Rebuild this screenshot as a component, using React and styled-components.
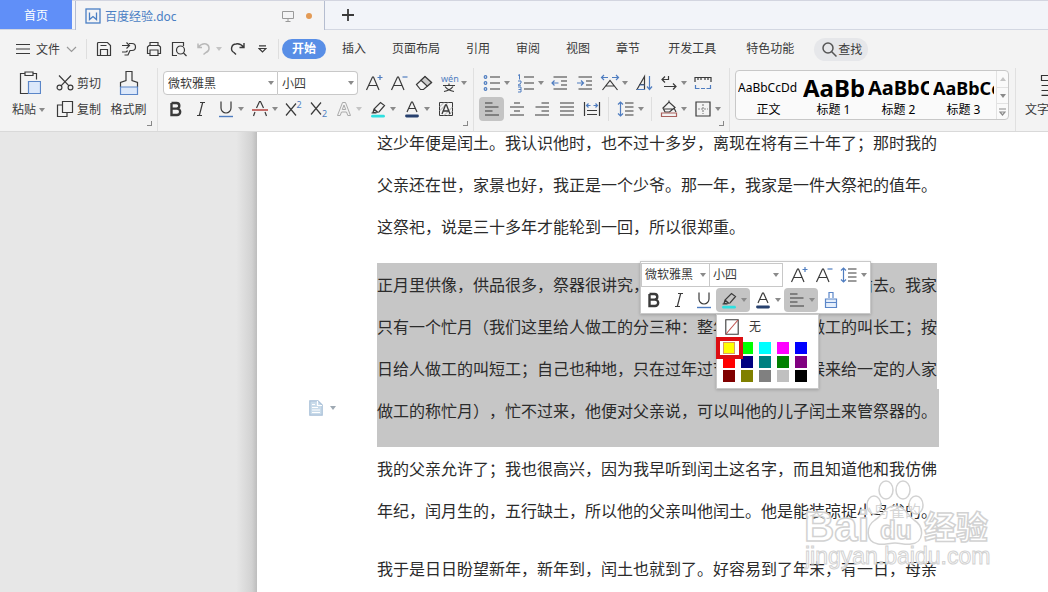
import React from "react";
import styled, { createGlobalStyle, css } from "styled-components";

const ink = "#3a3a3a";
const blue = "#4f7dc0";
const uiFont = '"Noto Sans", "Noto Sans CJK SC", sans-serif';

const Global = createGlobalStyle`
  * { box-sizing: border-box; }
  body { margin: 0; font-family: ${uiFont}; font-size: 12px; color: ${ink}; background: #e7e7e7; }
  button, select, input { font: inherit; color: inherit; }
  button { border: 0; padding: 0; background: none; cursor: pointer; }
  svg { display: block; flex: none; }
`;

const Shell = styled.div`
  height: 100vh;
  display: flex;
  flex-direction: column;
  overflow: hidden;
`;

/* ---------- window tabs ---------- */
const TabStrip = styled.header`
  flex: none;
  height: 30px;
  display: flex;
  background: #f2f4f9;
  border-top: 1px solid #d3d5e0;
  border-bottom: 1px solid #d3d7e2;
`;
const HomeTab = styled.button`
  width: 72px;
  height: 29px;
  margin-top: -1px;
  background: #608ff8;
  color: #fff;
`;
const FileTab = styled.div`
  width: 250px;
  height: 29px;
  margin-left: 3px;
  padding: 0 12px 0 9px;
  display: flex;
  align-items: center;
  gap: 4px;
  background: #f4f4f5;
  border: solid #b5bdd0;
  border-width: 0 1px;
  color: #4a7fc4;
`;
const FileName = styled.span`
  flex: 1;
`;
const Dot = styled.span`
  width: 6px;
  height: 6px;
  margin-left: 8px;
  border-radius: 50%;
  background: #e39a55;
`;
const NewTab = styled.button`
  width: 46px;
  display: grid;
  place-items: center;
`;

/* ---------- menu row ---------- */
const MenuBar = styled.nav`
  flex: none;
  height: 38px;
  display: flex;
  align-items: center;
  background: #f3f3f3;
  white-space: nowrap;
`;
const FileMenu = styled.button`
  height: 24px;
  padding: 0 5px 0 16px;
  display: flex;
  align-items: center;
  gap: 6px;
`;
const Rule = styled.span`
  flex: none;
  width: 1px;
  height: ${(p) => p.$h || 20}px;
  margin: 0 ${(p) => p.$gap || 4}px;
  background: #dedede;
`;
const MenuTab = styled.button`
  height: 20px;
  line-height: 18px;
  padding: 0 ${(p) => (p.$wide ? 15 : 13)}px;
  ${(p) =>
    p.$active &&
    css`
      padding: 0 10px;
      margin-right: 3px;
      border-radius: 10px;
      background: #588ee6;
      color: #fff;
      font-weight: 700;
    `}
`;
const Search = styled.button`
  height: 23px;
  margin-left: 5px;
  padding: 0 6px 0 7px;
  display: flex;
  align-items: center;
  border-radius: 12px;
  background: #e6e7ea;
`;

/* ---------- ribbon ---------- */
const Ribbon = styled.section`
  flex: none;
  height: 64px;
  display: flex;
  overflow: hidden;
  background: #f3f3f3;
  border-bottom: 1px solid #d9d9d9;
  position: relative;
  white-space: nowrap;
`;
const Group = styled.div`
  flex: none;
  position: relative;
  width: ${(p) => p.$w}px;
  padding: 2px 0 0 ${(p) => p.$pad}px;
  border-right: 1px solid #e0e0e0;
`;
const Row = styled.div`
  display: flex;
  align-items: center;
  height: ${(p) => p.$h || 26}px;
`;
const Corner = styled.span`
  position: absolute;
  right: 5px;
  bottom: 5px;
  width: 5px;
  height: 5px;
  border: solid #888;
  border-width: 0 1px 1px 0;
`;
const ToolBtn = styled.button`
  flex: none;
  display: flex;
  align-items: center;
  width: ${(p) => (p.$menu ? 34 : 25)}px;
  height: 24px;
  border-radius: 4px;
  background: ${(p) => (p.$pressed ? "#c4c4c4" : "none")};
`;
const Glyph = styled.span`
  width: 25px;
  display: grid;
  place-items: center;
`;
const Clipboard = styled.div`
  display: grid;
  grid-template-columns: 45px 55px 45px;
`;
const BigBtn = styled.button`
  display: flex;
  flex-direction: column;
  align-items: center;
  gap: 5px;
  line-height: 18px;
`;
const BigLabel = styled.span`
  display: flex;
  align-items: center;
  gap: 3px;
`;
const Stack = styled.div`
  display: flex;
  flex-direction: column;
`;
const SmallBtn = styled.button`
  height: 26px;
  display: flex;
  align-items: center;
  justify-content: center;
  gap: 3px;
`;

const ComboBox = styled.label`
  flex: none;
  position: relative;
  display: flex;
  align-items: center;
  width: ${(p) => p.$w}px;
  height: 24px;
  background: #fff;
  border: 1px solid #c8c8c8;
  border-radius: ${(p) => p.$r || "0"};
  & + & { border-left: 0; }
`;
const Select = styled.select`
  appearance: none;
  width: 100%;
  height: 100%;
  padding: 0 0 0 ${(p) => p.$pad}px;
  border: 0;
  background: none;
  outline: none;
`;
const ComboCaret = styled.span`
  position: absolute;
  right: 3px;
  pointer-events: none;
`;
const Spacer = styled.span`
  flex: none;
  width: 3px;
`;

const Styles = styled.div`
  width: 274px;
  height: 50px;
  display: flex;
  background: #fafafa;
  border: 1px solid #c8c8c8;
  border-radius: 4px;
  color: #000;
`;
const StyleCard = styled.button`
  width: 61px;
  margin: 0 2px;
  overflow: hidden;
  display: flex;
  flex-direction: column;
  align-items: center;
`;
const Sample = styled.span`
  height: 32px;
  line-height: 34px;
  align-self: flex-start;
  color: #000;
  font-size: ${(p) => p.$size}px;
  font-weight: ${(p) => (p.$bold ? 700 : 400)};
`;
const StyleName = styled.span`
  line-height: 13px;
  color: #000;
`;
const Spin = styled.div`
  width: 12px;
  display: grid;
  grid-template-rows: repeat(3, 1fr);
  border-left: 1px solid #e2e2e2;
`;
const SpinBtn = styled.button`
  display: grid;
  place-items: center;
  & + & { border-top: 1px solid #e2e2e2; }
`;

/* ---------- document ---------- */
const Workspace = styled.main`
  flex: 1;
  min-height: 0;
  display: flex;
  position: relative;
  overflow: hidden;
`;
const Gutter = styled.div`
  flex: none;
  width: 257px;
  background: linear-gradient(to right, #e7e7e7 92%, #d2d2d2 98%, #bdbdbd);
`;
const Page = styled.article`
  flex: 1;
  background: #fff;
  margin-top: -11px;
`;
const Block = styled.div`
  display: grid;
  grid-template-columns: 120px auto;
  justify-content: start;
  margin-bottom: ${(p) => (p.$tight ? 0 : 16)}px;
`;
const Para = styled.div`
  grid-column: 2;
  position: relative;
  font-family: "Noto Sans CJK SC", sans-serif;
  font-size: 16px;
  line-height: 42px;
  color: #2b2b2b;
  white-space: nowrap;
  font-weight: 400;
  text-spacing-trim: space-all;
`;
const Line = styled.div`
  width: max-content;
  ${(p) => p.$selected && css`background: #c6c6c6;`}
  ${(p) =>
    p.$end &&
    css`
      padding: 0 2px 16px 0;
    `}
`;
const MarginTool = styled.button`
  align-self: end;
  justify-self: end;
  display: flex;
  align-items: center;
  gap: 7px;
  margin: 0 41px 31px 0;
`;

/* ---------- floating tools ---------- */
const Floating = styled.div`
  position: absolute;
  left: 263px;
  top: -2px;
  width: 231px;
  padding: 1px 0 0;
  background: #fff;
  border: 1px solid #c9c9c9;
  box-shadow: 0 1px 3px rgba(0, 0, 0, 0.2);
  font: 12px/16px ${uiFont};
  color: ${ink};
  z-index: 2;
`;
const Palette = styled.div`
  position: absolute;
  left: 75px;
  top: 52px;
  width: 103px;
  height: 75px;
  padding: 3px 0 0 6px;
  background: #fff;
  border: 1px solid #c9c9c9;
  box-shadow: 0 1px 3px rgba(0, 0, 0, 0.2);
`;
const NoColor = styled.button`
  display: flex;
  align-items: center;
  gap: 10px;
  height: 18px;
  padding-left: 2px;
`;
const Swatches = styled.div`
  display: grid;
  grid-template-columns: repeat(5, 12px);
  grid-auto-rows: 12px;
  gap: 2px 6px;
  margin-top: 6px;
`;
const Swatch = styled.button`
  position: relative;
  background: ${(p) => p.$c};
  ${(p) =>
    p.$picked &&
    css`
      z-index: 1;
      border: 1px solid #d9a060;
      &::after {
        content: "";
        position: absolute;
        inset: -6px -9px -6px -8px;
        border: 4px solid #dc0d12;
      }
    `}
`;

const Watermark = styled.div`
  position: absolute;
  right: 54px;
  bottom: 20px;
  z-index: 3;
  pointer-events: none;
`;

/* ---------- icons ---------- */
const Icon = ({ w = 20, h = 20, s = ink, sw = 1.2, children }) => (
  <svg width={w} height={h} viewBox={`0 0 ${w} ${h}`} fill="none" stroke={s} strokeWidth={sw} aria-hidden="true">
    {children}
  </svg>
);
const Caret = ({ c = "#8a8a8a", up }) => (
  <svg width="6" height="4" viewBox="0 0 6 4" aria-hidden="true">
    <path d={up ? "M0 4h6L3 0z" : "M0 0h6L3 4z"} fill={c} />
  </svg>
);

const icons = {
  plus: <Icon w={14} h={14} sw={1.8}><path d="M7 1v12M1 7h12" /></Icon>,
  burger: <Icon w={14} h={12}><path d="M0 1.5h14M0 6h14M0 10.500h14" /></Icon>,
  chev: <Icon w={11} h={7} s="#999"><path d="M1 1l4.500 4.500L10 1" /></Icon>,
  doc: <Icon w={16} h={16} s="#4a7fc4" sw={1.3}><rect x="1" y="1" width="14" height="14" /><path d="M4.500 4.500v7l3.500-3 3.500 3v-7" /></Icon>,
  screen: <Icon w={12} h={12} s="#9a9a9a" sw={1}><path d="M.5 1.500h11v7H.5zM6 8.500v3M3.500 11.500h5" /></Icon>,
  save: <Icon><path d="M4 3.500h9.500l3 3v10H3.500V4.500zM6.500 16.500v-6h7v6M6.500 6.500h6" /></Icon>,
  share: <Icon><path d="M3 6.500h7M7.500 3.500l3 3-3 3M3 13h3.500q1.500 0 2-1.500M10 4.500h3a3.500 3.500 0 010 7h-2l-2 4.500H5.500" /></Icon>,
  print: <Icon><path d="M6 7V3.500h8V7M5.500 14.500H3.500V8l1.500-1.500h10L16.500 8v6.500h-2M6 11h8v5.500H6z" /></Icon>,
  preview: <Icon><path d="M8 16.500H3.500v-13h11V7" /><circle cx="11.500" cy="11" r="4" /><path d="M14.500 14l3 3" /></Icon>,
  undo: <Icon s="#b9b9b9" sw={1.5}><path d="M4 4.500v4h4M4 8.500q4-4.500 8-3.500a4.500 4.500 0 010 8.500l-2.500 2" /></Icon>,
  redo: <Icon sw={1.4}><path d="M16 4v4.500h-4.500M16 8.500Q12 4 8 5a4.500 4.500 0 00-2 8.500l2 2" /></Icon>,
  more: <Icon w={9} h={9}><path d="M1 .8h7M1 3.500l3.500 3.500L8 3.500z" /></Icon>,
  search: <Icon w={17} h={17} s="#555" sw={1.5}><circle cx="7" cy="7" r="5" /><path d="M10.500 10.500l5 5" /></Icon>,
  paste: (
    <Icon w={24} h={26}>
      <path d="M8 3.500H3.500v20h8M16 3.500h3.500v6M8 2h8v3.500H8z" />
      <path d="M11.500 11.500h12v12h-12z" fill="#dce8fa" stroke="#5b86c8" />
    </Icon>
  ),
  cut: <Icon w={18} h={18}><circle cx="3.500" cy="13.500" r="2.400" /><circle cx="14.500" cy="13.500" r="2.400" /><path d="M3 1.500l10 10.300M15 1.500L5 11.800" /></Icon>,
  copy: <Icon w={18} h={18}><path d="M6.500 1.500h10v11h-10zM6.500 5H1.500v11.500h9.500v-4" /></Icon>,
  brush: (
    <Icon w={20} h={26}>
      <path d="M1.500 17v-4.500L7 10.500V1.500h6v9l5.500 2V17" />
      <path d="M1.500 17h17v7.500h-17z" fill="#dce8fa" stroke="#5b86c8" />
    </Icon>
  ),
  brushSm: (
    <Icon w={14} h={18}>
      <path d="M5 7V1.500h4V7" stroke="#5b86c8" />
      <path d="M1.500 8h11v3.500h-11zM1.500 11.500h11v5h-11z" fill="#e4eefb" stroke="#5b86c8" />
    </Icon>
  ),
  bigger: <Icon><path d="M2.500 17L8.500 4h1L15 17M5 12.500h8" /><path d="M13.500 4.500h5M16 2v5" stroke={blue} /></Icon>,
  smaller: <Icon><path d="M2.500 17L8.500 4h1L15 17M5 12.500h8" /><path d="M13.500 4h5" stroke={blue} /></Icon>,
  eraser: <Icon><path d="M2.500 11.500L11 3.500l6.500 6-8 7h-3z" /><path d="M7 7.300l6.300 6L17.500 9.500 11 3.500z" fill="#ccc" /></Icon>,
  bold: <Icon sw={2.4}><path d="M5.500 4v12h5.500a3.200 3.200 0 000-6.400H5.500M5.500 4h5a2.800 2.800 0 010 5.600" /></Icon>,
  italic: <Icon><path d="M9 3.500h5M6 16.500h5M11.700 3.500l-3.400 13" /></Icon>,
  under: <Icon><path d="M5 2.500v6.500a5 5 0 0010 0V2.500" /><path d="M3 17.500h14" stroke={blue} strokeWidth="1.400" /></Icon>,
  strike: <Icon><path d="M6.500 9l3-6.500h1l3 6.500M5 13l-1.500 4M15 13l1.500 4" /><path d="M2 11h16" stroke="#b4423e" strokeWidth="1.500" /></Icon>,
  clearA: <Icon s="#aaa" sw={1}><path d="M3.500 16.500L8.500 3.500h3l5 13h-2.700l-1.300-3.500H7.500l-1.300 3.500zM8.300 10.500h3.400L10 6z" /></Icon>,
  marker: <Icon><path d="M5 13.500l1-3.500 6.500-6.500 4 3L11 13zM6 10l4 3.500M3.500 14h5" /><path d="M4.500 17.200h11" stroke="#2fe0e0" strokeWidth="2.800" strokeLinecap="round" /></Icon>,
  fontColor: <Icon><path d="M5 13l4.500-10h1L15 13M6.700 9.500h6.600" /><path d="M4.500 17h11" stroke="#27406e" strokeWidth="2.800" strokeLinecap="round" /></Icon>,
  shade: <Icon sw={1}><path d="M3.500 3.500h13v13h-13z" /><path d="M3.500 8L8 3.500M3.500 12L12 3.500M8 16.500l8.500-8.500M12 16.500l4.500-4.500" stroke="#aaa" /><path d="M6 15l3.500-9h1L14 15M7.500 12h5" strokeWidth="1.300" /></Icon>,
  outdent: <Icon><path d="M3.500 4h13.500M11 8h6M11 12h6M3.500 16h13.500" /><path d="M8.500 10H2M4.500 7.500L2 10l2.500 2.500" stroke={blue} /></Icon>,
  indent: <Icon><path d="M3.500 4h13.500M11 8h6M11 12h6M3.500 16h13.500" /><path d="M2 10h6.500M6 7.500L8.500 10 6 12.500" stroke={blue} /></Icon>,
  scaleA: <Icon><path d="M2.500 17L10 7.500 17.500 17M5.500 13h9" /><path d="M8 4.500H1.500M4 2L1.500 4.500 4 7M12 4.500h6.500M16 2l2.500 2.500L16 7" stroke={blue} /></Icon>,
  sort: <Icon><path d="M3 16.500L10.500 3.500v13zM5 11.500h5" /><path d="M3 16.500h8M5.500 12h5M15.500 3v13M13 13.500l2.500 3 2.500-3" stroke={blue} /></Icon>,
  ret: <Icon><path d="M6 3.500L3 6.500l3 3M3 6.500h6.500v-3.500M5 13.500h12M14 10.500l3 3-3 3" /></Icon>,
  tabs: <Icon><path d="M2 9V4.500h16V9M5 4.500V7M8 4.500V7M12 4.500V7M15 4.500V7" /><path d="M2.500 12v3.500h4M8 15.500h4M17.500 12v3.500h-4" stroke={blue} /></Icon>,
  left: <Icon><path d="M3 4h7.500M3 8h13.500M3 12h7.500M3 16h14" /></Icon>,
  center: <Icon><path d="M7 4h6M3 8h14M7 12h6M3 16h14" /></Icon>,
  right: <Icon><path d="M9.500 4H17M3.500 8H17M9.500 12H17M3 16h14" /></Icon>,
  justify: <Icon><path d="M3 4h14M3 8h14M3 12h14M3 16h14" /></Icon>,
  distribute: <Icon><path d="M2.500 3v14M17.500 3v14M5 11.500h10M5 15.500h10" /><path d="M5 6.500h3.500M6.500 4.500l-2 2 2 2M11.500 6.500H15M13.500 4.500l2 2-2 2" stroke={blue} /></Icon>,
  spacing: <Icon><path d="M9 4h8.500M9 8h8.500M9 12h8.500M9 16h8.500" /><path d="M4.500 3v14M2 5.500L4.500 3 7 5.500M2 14.500L4.500 17 7 14.500" stroke={blue} /></Icon>,
  bucket: <Icon><path d="M4 9l6-6 6 5.500-5.500 4.500H6zM4 10h11.500l1.500 3M10 3V1.500" /><path d="M2.500 14h15v3.500h-15z" stroke="#a9605c" /></Icon>,
  border: <Icon><path d="M3 3h14v14H3z" /><path d="M10 5v10M5 10h10" stroke="#888" strokeDasharray="2 1" /></Icon>,
  none: <Icon w={14} h={16} sw={1.1}><path d="M.8.8h12.400v14.400H.8z" /><path d="M1 15L13 1" stroke="#c0504d" /></Icon>,
  note: (
    <Icon w={14} h={16} s="#a9c0d8">
      <path d="M.8.8h8.200L13.200 5v10.200H.8z" fill="#c9dbea" />
      <path d="M3 4.500h3M3 7.500h6M3 10h8M3 12.500h8M8.500 1v4.500H13" stroke="#fff" />
    </Icon>
  ),
  textbox: <Icon w={20} h={26} s="#333"><path d="M20 5.500H2.500v5H20M2.500 15.500H20M2.500 20.500H20M2.500 25.400H20" /></Icon>,
};

const SvgText = ({ children, ...p }) => (
  <text stroke="none" fill={blue} fontFamily={uiFont} {...p}>{children}</text>
);
icons.sup = <Icon><path d="M2 4.500l10 12M12 4.500l-10 12" /><SvgText x="12.500" y="9" fontSize="9">2</SvgText></Icon>;
icons.sub = <Icon><path d="M2 3.500l10 12M12 3.500l-10 12" /><SvgText x="13" y="18" fontSize="9">2</SvgText></Icon>;
icons.pinyin = (
  <Icon>
    <SvgText x="2" y="9" fontSize="9">wén</SvgText>
    <path d="M4 12.500h12M10 10.500v2M6 13.500q3 4 9 5M14 13.500q-3 4-9 5" />
  </Icon>
);
icons.bullets = (
  <Icon><path d="M8 4h10M8 10h10M8 16h10" /><g stroke={blue}><circle cx="3.500" cy="4" r="1.300" /><circle cx="3.500" cy="10" r="1.300" /><circle cx="3.500" cy="16" r="1.300" /></g></Icon>
);
icons.numbers = (
  <Icon>
    <path d="M8 4h10M8 10h10M8 16h10" />
    <path d="M2 2.500l1.500-1v5M2 8h3v2l-3 2.200h3M2 14h3v5H2M2.500 16.500H5" stroke={blue} strokeWidth="1" />
  </Icon>
);

const Tool = ({ icon, label, menu, pressed, dim }) => (
  <ToolBtn $menu={menu} $pressed={pressed} aria-label={label} aria-pressed={pressed}>
    <Glyph>{icons[icon]}</Glyph>
    {menu && <Caret c={dim ? "#c4c4c4" : undefined} />}
  </ToolBtn>
);
const Combo = ({ label, value, w, r, pad = 4 }) => (
  <ComboBox $w={w} $r={r}>
    <Select aria-label={label} $pad={pad} defaultValue={value}><option>{value}</option></Select>
    <ComboCaret><Caret /></ComboCaret>
  </ComboBox>
);

const menuTabs = ["插入", "页面布局", "引用", "审阅", "视图", "章节"];
const palette = [
  "#ffff00", "#00ff00", "#00ffff", "#ff00ff", "#0000ff",
  "#ff0000", "#000080", "#008080", "#008000", "#800080",
  "#800000", "#808000", "#808080", "#c0c0c0", "#000000",
];
const styleCards = [
  ["正文", "AaBbCcDd", 12, false],
  ["标题 1", "AaBb", 24, true],
  ["标题 2", "AaBbC", 20, true],
  ["标题 3", "AaBbCc", 18, true],
];

const Lines = ({ items }) => items.map((t) => <Line key={t}>{t}</Line>);

export default function App() {
  return (
    <Shell>
      <Global />
      <TabStrip>
        <HomeTab>首页</HomeTab>
        <FileTab>
          {icons.doc}
          <FileName>百度经验.doc</FileName>
          {icons.screen}
          <Dot />
        </FileTab>
        <NewTab aria-label="新建">{icons.plus}</NewTab>
      </TabStrip>

      <MenuBar>
        <FileMenu>{icons.burger}文件{icons.chev}</FileMenu>
        <Rule $h={20} />
        <Tool icon="save" label="保存" />
        <Tool icon="share" label="输出" />
        <Tool icon="print" label="打印" />
        <Tool icon="preview" label="打印预览" />
        <Tool icon="undo" label="撤销" menu dim />
        <Tool icon="redo" label="恢复" />
        <ToolBtn aria-label="更多"><Glyph>{icons.more}</Glyph></ToolBtn>
        <Rule $h={20} $gap={3} />
        <MenuTab $active>开始</MenuTab>
        {menuTabs.map((t) => <MenuTab key={t}>{t}</MenuTab>)}
        <MenuTab $wide>开发工具</MenuTab>
        <MenuTab $wide>特色功能</MenuTab>
        <Search>{icons.search}查找</Search>
      </MenuBar>

      <Ribbon>
        <Group $w={158} $pad={6}>
          <Clipboard>
            <BigBtn>{icons.paste}<BigLabel>粘贴<Caret /></BigLabel></BigBtn>
            <Stack>
              <SmallBtn>{icons.cut}剪切</SmallBtn>
              <SmallBtn>{icons.copy}复制</SmallBtn>
            </Stack>
            <BigBtn>{icons.brush}<BigLabel>格式刷</BigLabel></BigBtn>
          </Clipboard>
          <Corner />
        </Group>

        <Group $w={316} $pad={5}>
          <Row>
            <Combo label="字体" value="微软雅黑" w={115} r="4px 0 0 4px" />
            <Combo label="字号" value="小四" w={80} r="0 4px 4px 0" />
            <Spacer />
            <Tool icon="bigger" label="增大字号" />
            <Tool icon="smaller" label="减小字号" />
            <Tool icon="eraser" label="清除格式" />
            <Tool icon="pinyin" label="拼音指南" menu />
          </Row>
          <Row>
            <Tool icon="bold" label="加粗" />
            <Tool icon="italic" label="倾斜" />
            <Tool icon="under" label="下划线" menu />
            <Tool icon="strike" label="删除线" menu />
            <Tool icon="sup" label="上标" />
            <Tool icon="sub" label="下标" />
            <Tool icon="clearA" label="文字效果" menu dim />
            <Tool icon="marker" label="突出显示" menu />
            <Tool icon="fontColor" label="字体颜色" menu />
            <Tool icon="shade" label="字符底纹" />
          </Row>
          <Corner />
        </Group>

        <Group $w={256} $pad={5}>
          <Row>
            <Tool icon="bullets" label="项目符号" menu />
            <Tool icon="numbers" label="编号" menu />
            <Tool icon="outdent" label="减少缩进" />
            <Tool icon="indent" label="增加缩进" />
            <Tool icon="scaleA" label="中文版式" menu />
            <Tool icon="sort" label="排序" />
            <Tool icon="ret" label="显示标记" menu />
            <Tool icon="tabs" label="制表位" />
          </Row>
          <Row>
            <Tool icon="left" label="左对齐" pressed />
            <Tool icon="center" label="居中" />
            <Tool icon="right" label="右对齐" />
            <Tool icon="justify" label="两端对齐" />
            <Tool icon="distribute" label="分散对齐" />
            <Rule $h={24} />
            <Tool icon="spacing" label="行距" menu />
            <Rule $h={24} />
            <Tool icon="bucket" label="底纹颜色" menu />
            <Tool icon="border" label="边框" menu />
          </Row>
          <Corner />
        </Group>

        <Group $w={286} $pad={5}>
          <Styles>
            {styleCards.map(([name, sample, size, bold]) => (
              <StyleCard key={name}>
                <Sample $size={size} $bold={bold}>{sample}</Sample>
                <StyleName>{name}</StyleName>
              </StyleCard>
            ))}
            <Spin>
              <SpinBtn aria-label="上一行"><Caret up c="#c4c4c4" /></SpinBtn>
              <SpinBtn aria-label="下一行"><Caret /></SpinBtn>
              <SpinBtn aria-label="展开"><Icon w={7} h={8} s="#8a8a8a"><path d="M0 1h7M1 4l2.500 3L6 4z" /></Icon></SpinBtn>
            </Spin>
          </Styles>
        </Group>

        <Group $w={80} $pad={9}>
          <BigBtn>{icons.textbox}<BigLabel>文字排版</BigLabel></BigBtn>
        </Group>
      </Ribbon>

      <Workspace>
        <Gutter />
        <Page>
          <Block>
            <Para>
              <Lines items={[
                "这少年便是闰土。我认识他时，也不过十多岁，离现在将有三十年了；那时我的",
                "父亲还在世，家景也好，我正是一个少爷。那一年，我家是一件大祭祀的值年。",
                "这祭祀，说是三十多年才能轮到一回，所以很郑重。",
              ]} />
            </Para>
          </Block>

          <Block $tight>
            <MarginTool aria-label="段落布局">{icons.note}<Caret c="#9fa9b3" /></MarginTool>
            <Para>
              <Line $selected>正月里供像，供品很多，祭器很讲究，拜的人也很多，祭器也很要防偷去。我家</Line>
              <Line $selected>只有一个忙月（我们这里给人做工的分三种：整年给一定人家做工的叫长工；按</Line>
              <Line $selected>日给人做工的叫短工；自己也种地，只在过年过节以及收租时候来给一定的人家</Line>
              <Line $selected $end>做工的称忙月），忙不过来，他便对父亲说，可以叫他的儿子闰土来管祭器的。</Line>
              <Floating>
                <Row $h={24}>
                  <Combo label="字体" value="微软雅黑" w={69} pad={3} />
                  <Combo label="字号" value="小四" w={73} pad={3} />
                  <Spacer />
                  <Tool icon="bigger" label="增大字号" />
                  <Tool icon="smaller" label="减小字号" />
                  <Tool icon="spacing" label="行距" menu />
                </Row>
                <Row>
                  <Tool icon="bold" label="加粗" />
                  <Tool icon="italic" label="倾斜" />
                  <Tool icon="under" label="下划线" />
                  <Tool icon="marker" label="突出显示" menu pressed />
                  <Tool icon="fontColor" label="字体颜色" menu />
                  <Tool icon="left" label="对齐" menu pressed />
                  <Tool icon="brushSm" label="格式刷" />
                </Row>
                <Palette>
                  <NoColor>{icons.none}无</NoColor>
                  <Swatches>
                    {palette.map((c, i) => <Swatch key={c} $c={c} $picked={i === 0} aria-label={c} />)}
                  </Swatches>
                </Palette>
              </Floating>
            </Para>
          </Block>

          <Block>
            <Para>
              <Lines items={[
                "我的父亲允许了；我也很高兴，因为我早听到闰土这名字，而且知道他和我仿佛",
                "年纪，闰月生的，五行缺土，所以他的父亲叫他闰土。他是能装弶捉小鸟雀的。",
              ]} />
            </Para>
          </Block>
          <Block>
            <Para>
              <Lines items={["我于是日日盼望新年，新年到，闰土也就到了。好容易到了年末，有一日，母亲"]} />
            </Para>
          </Block>
        </Page>

        <Watermark>
          <svg width="190" height="94" viewBox="0 0 190 94" fill="#fff" fillOpacity="0.8" stroke="#d2d2d2" strokeWidth="1.500">
            <ellipse cx="70" cy="27" rx="7" ry="9" />
            <ellipse cx="82" cy="12" rx="7" ry="9" />
            <ellipse cx="99" cy="12" rx="7" ry="9" />
            <ellipse cx="112" cy="27" rx="7" ry="9" />
            <path d="M91 28c10 0 12 9 19 14 11 7 10 23-3 24-6 1-10-1-16-1s-11 2-17 1c-13-2-12-18-3-24 8-5 10-14 20-14z" />
            <text x="0" y="63" fontFamily='"Liberation Sans", sans-serif' fontWeight="700" fontSize="42">Bai</text>
            <text x="76" y="61" fontFamily='"Liberation Sans", sans-serif' fontWeight="700" fontSize="26">du</text>
            <text x="120" y="61" fontFamily='"Noto Sans CJK SC", sans-serif' fontWeight="700" fontSize="32">经验</text>
            <text x="1" y="86" fontFamily='"Liberation Sans", sans-serif' fontWeight="400" fontSize="23" strokeWidth="1">jingyan.baidu.com</text>
          </svg>
        </Watermark>
      </Workspace>
    </Shell>
  );
}
